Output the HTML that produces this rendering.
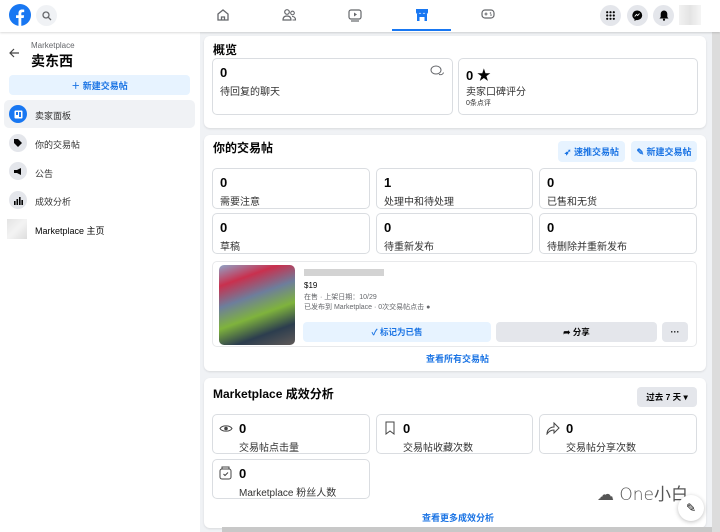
<!DOCTYPE html>
<html><head><meta charset="utf-8"><style>
*{box-sizing:border-box;margin:0;padding:0}
body{width:720px;height:532px;overflow:hidden;font-family:"Liberation Sans","Noto Sans CJK SC",sans-serif;background:#f0f2f5;position:relative;color:#050505}
.abs{position:absolute}
.top{left:0;top:0;width:720px;height:32px;background:#fff;box-shadow:0 1px 2px rgba(0,0,0,.15);z-index:3}
.side{left:0;top:32px;width:200px;height:500px;background:#fff}
.card{background:#fff;border-radius:6px;box-shadow:0 1px 2px rgba(0,0,0,.1)}
.tile{position:absolute;border:1px solid #dadde1;border-radius:5px;background:#fff}
.tile b{position:absolute;left:7px;top:6px;font-size:13px;font-weight:bold}
.tile span{position:absolute;left:7px;top:24px;font-size:10px;color:#333}
.h{position:absolute;font-size:12px;font-weight:bold}
.btnb{position:absolute;background:#e7f3ff;color:#1b74e4;font-size:9px;font-weight:bold;border-radius:4px;display:flex;align-items:center;justify-content:center;gap:3px}
.circ{position:absolute;width:19px;height:19px;border-radius:50%;background:#e4e6eb;display:flex;align-items:center;justify-content:center}
.si{position:absolute;left:9px;width:18px;height:18px;border-radius:50%;background:#e4e6eb;display:flex;align-items:center;justify-content:center}
.sl{position:absolute;left:35px;font-size:9px;color:#333}
.link{position:absolute;font-size:9px;color:#1b74e4;font-weight:bold}
</style></head><body>
<div class="abs top">
 <svg class="abs" style="left:9px;top:4px" width="22" height="22" viewBox="0 0 22 22"><circle cx="11" cy="11" r="11" fill="#1877f2"/><path d="M12.3 22V14h2.4l.4-2.8h-2.8V9.5c0-.8.3-1.4 1.4-1.4h1.5V5.6c-.3 0-1.1-.1-2.1-.1-2.2 0-3.6 1.3-3.6 3.7v2H7v2.8h2.5V22z" fill="#fff"/></svg>
 <div class="circ" style="left:36px;top:5px;width:21px;height:21px;background:#f0f2f5"><svg width="10" height="10" viewBox="0 0 10 10"><circle cx="4" cy="4" r="3" stroke="#65676b" stroke-width="1.3" fill="none"/><path d="M6.3 6.3L9 9" stroke="#65676b" stroke-width="1.3"/></svg></div>
 <svg class="abs" style="left:216px;top:8px" width="14" height="14" viewBox="0 0 14 14"><path d="M2 6L7 2l5 4v6H2z M5.5 12V9h3v3" stroke="#65676b" stroke-width="1.3" fill="none"/></svg>
 <svg class="abs" style="left:282px;top:8px" width="15" height="14" viewBox="0 0 15 14"><circle cx="5" cy="4" r="2.3" stroke="#65676b" stroke-width="1.2" fill="none"/><path d="M1 12c0-3 2-4 4-4s4 1 4 4z" stroke="#65676b" stroke-width="1.2" fill="none"/><circle cx="10.5" cy="5" r="1.8" stroke="#65676b" stroke-width="1.1" fill="none"/><path d="M10 8.5c2 0 3.5 1 3.5 3.5h-3" stroke="#65676b" stroke-width="1.1" fill="none"/></svg>
 <svg class="abs" style="left:348px;top:9px" width="15" height="13" viewBox="0 0 15 13"><rect x="1" y="1" width="12" height="9" rx="2" stroke="#65676b" stroke-width="1.2" fill="none"/><path d="M6 3.5v4l3-2z" fill="#65676b"/><path d="M3 12h8" stroke="#65676b" stroke-width="1.2"/></svg>
 <svg class="abs" style="left:415px;top:8px" width="14" height="14" viewBox="0 0 14 14"><path d="M1 1h12v3a2 2 0 0 1-4 0 2 2 0 0 1-4 0 2 2 0 0 1-4 0z" fill="#1877f2"/><rect x="2" y="6" width="10" height="7" fill="#1877f2"/><rect x="4.5" y="9" width="5" height="4" fill="#fff"/></svg>
 <div class="abs" style="left:392px;top:29px;width:59px;height:2px;background:#1877f2"></div>
 <svg class="abs" style="left:481px;top:9px" width="14" height="11" viewBox="0 0 14 11"><rect x="1" y="1" width="12" height="8" rx="3" stroke="#65676b" stroke-width="1.2" fill="none"/><path d="M3.5 5h3M5 3.5v3" stroke="#65676b" stroke-width="1.1"/><circle cx="9.5" cy="4" r=".8" fill="#65676b"/><circle cx="10" cy="6" r=".8" fill="#65676b"/></svg>
 <div class="circ" style="left:600px;top:5px;width:21px;height:21px"><svg width="9" height="9" viewBox="0 0 9 9" fill="#050505"><circle cx="1.2" cy="1.2" r="1.1"/><circle cx="4.5" cy="1.2" r="1.1"/><circle cx="7.8" cy="1.2" r="1.1"/><circle cx="1.2" cy="4.5" r="1.1"/><circle cx="4.5" cy="4.5" r="1.1"/><circle cx="7.8" cy="4.5" r="1.1"/><circle cx="1.2" cy="7.8" r="1.1"/><circle cx="4.5" cy="7.8" r="1.1"/><circle cx="7.8" cy="7.8" r="1.1"/></svg></div>
 <div class="circ" style="left:627px;top:5px;width:21px;height:21px"><svg width="11" height="11" viewBox="0 0 11 11"><path d="M5.5 0.5a5 4.8 0 0 0-3 8.7V11l1.7-1a5 4.8 0 1 0 1.3-9.5z" fill="#050505"/><path d="M2.7 6.5l1.8-2 1.2 1 1.8-2-1.8 2-1.2-1z" stroke="#fff" stroke-width="0.9" fill="none"/></svg></div>
 <div class="circ" style="left:653px;top:5px;width:21px;height:21px"><svg width="10" height="11" viewBox="0 0 10 11"><path d="M5 .5a3.3 3.3 0 0 0-3.3 3.3V7L.5 8.5h9L8.3 7V3.8A3.3 3.3 0 0 0 5 .5z" fill="#050505"/><circle cx="5" cy="9.7" r="1.1" fill="#050505"/></svg></div>
 <div class="abs" style="left:679px;top:5px;width:22px;height:20px;background:linear-gradient(90deg,#eee,#ddd,#f3f3f3);opacity:.8"></div>
</div>
<div class="abs side">
 <svg class="abs" style="left:9px;top:16px" width="11" height="10" viewBox="0 0 11 10"><path d="M10 5H1.5M5 1L1 5l4 4" stroke="#444" stroke-width="1.2" fill="none"/></svg>
 <div class="abs" style="left:31px;top:9px;font-size:8px;color:#65676b">Marketplace</div>
 <div class="abs" style="left:31px;top:19px;font-size:14px;font-weight:bold">卖东西</div>
 <div class="btnb" style="left:9px;top:43px;width:181px;height:20px">＋ 新建交易帖</div>
 <div class="abs" style="left:4px;top:68px;width:191px;height:28px;background:#f0f2f5;border-radius:5px"></div>
 <div class="si" style="top:73px;background:#1877f2"><svg width="9" height="9" viewBox="0 0 9 9"><rect x=".5" y=".5" width="8" height="8" rx="1" fill="#fff"/><rect x="2" y="2" width="2" height="3" fill="#1877f2"/><rect x="5" y="2" width="2" height="5" fill="#1877f2"/></svg></div>
 <div class="sl" style="top:77px">卖家面板</div>
 <div class="si" style="top:102px"><svg width="10" height="10" viewBox="0 0 10 10"><path d="M1 1h4l4 4-4 4-4-4z" fill="#050505"/></svg></div>
 <div class="sl" style="top:106px">你的交易帖</div>
 <div class="si" style="top:130px"><svg width="10" height="9" viewBox="0 0 10 9"><path d="M1 3h3l4-2v7L4 6H1z" fill="#050505"/></svg></div>
 <div class="sl" style="top:135px">公告</div>
 <div class="si" style="top:159px"><svg width="9" height="9" viewBox="0 0 9 9" fill="#050505"><rect x="0" y="5" width="1.6" height="4"/><rect x="2.5" y="3" width="1.6" height="6"/><rect x="5" y="1" width="1.6" height="8"/><rect x="7.4" y="4" width="1.6" height="5"/></svg></div>
 <div class="sl" style="top:163px">成效分析</div>
 <div class="abs" style="left:7px;top:187px;width:20px;height:20px;background:linear-gradient(135deg,#e3e3e3,#f3f3f3,#ddd)"></div>
 <div class="sl" style="top:192px;color:#050505">Marketplace 主页</div>
</div>
<div class="abs card" style="left:204px;top:36px;width:502px;height:92px">
 <div class="h" style="left:9px;top:5px">概览</div>
 <div class="tile" style="left:8px;top:22px;width:241px;height:57px"><b>0</b><span>待回复的聊天</span>
  <svg class="abs" style="left:217px;top:6px" width="15" height="13" viewBox="0 0 15 13"><ellipse cx="6" cy="5" rx="5" ry="4" stroke="#65676b" fill="none"/><path d="M9 9.5c2 .5 4 0 4.5-2" stroke="#65676b" fill="none"/></svg></div>
 <div class="tile" style="left:254px;top:22px;width:240px;height:57px"><b>0 <span style="position:static;font-size:14px;color:#050505">★</span></b><span>卖家口碑评分</span><span style="top:39px;font-size:7px">0条点评</span></div>
</div>
<div class="abs card" style="left:204px;top:135px;width:502px;height:236px">
 <div class="h" style="left:9px;top:4px">你的交易帖</div>
 <div class="btnb" style="left:354px;top:6px;width:67px;height:21px">➶ 速推交易帖</div>
 <div class="btnb" style="left:427px;top:6px;width:66px;height:21px">✎ 新建交易帖</div>
 <div class="tile" style="left:8px;top:33px;width:158px;height:41px"><b>0</b><span>需要注意</span></div>
 <div class="tile" style="left:172px;top:33px;width:157px;height:41px"><b>1</b><span>处理中和待处理</span></div>
 <div class="tile" style="left:335px;top:33px;width:158px;height:41px"><b>0</b><span>已售和无货</span></div>
 <div class="tile" style="left:8px;top:78px;width:158px;height:41px"><b>0</b><span>草稿</span></div>
 <div class="tile" style="left:172px;top:78px;width:157px;height:41px"><b>0</b><span>待重新发布</span></div>
 <div class="tile" style="left:335px;top:78px;width:158px;height:41px"><b>0</b><span>待删除并重新发布</span></div>
 <div class="tile" style="left:8px;top:126px;width:485px;height:86px;border-color:#e8e9eb"></div>
 <div class="abs" style="left:15px;top:130px;width:76px;height:80px;border-radius:5px;background:linear-gradient(160deg,#8fa4c8 0%,#c9304e 20%,#6d7e9c 40%,#7fb33c 60%,#2c3d4e 80%,#605a58 100%)"></div>
 <div class="abs" style="left:100px;top:134px;width:80px;height:7px;background:#c8c8c8;opacity:.8"></div>
 <div class="abs" style="left:100px;top:146px;font-size:8px">$19</div>
 <div class="abs" style="left:100px;top:157px;font-size:7px;color:#65676b">在售 · 上架日期：10/29</div>
 <div class="abs" style="left:100px;top:167px;font-size:7px;color:#65676b">已发布到 Marketplace · 0次交易帖点击 ●</div>
 <div class="btnb" style="left:99px;top:187px;width:188px;height:20px;font-size:8.5px">✓ 标记为已售</div>
 <div class="btnb" style="left:292px;top:187px;width:161px;height:20px;font-size:8.5px;background:#e4e6eb;color:#050505">➦ 分享</div>
 <div class="btnb" style="left:458px;top:187px;width:26px;height:20px;background:#e4e6eb;color:#050505">···</div>
 <div class="link" style="left:222px;top:217px">查看所有交易帖</div>
</div>
<div class="abs card" style="left:204px;top:378px;width:502px;height:150px">
 <div class="h" style="left:9px;top:7px">Marketplace 成效分析</div>
 <div class="btnb" style="left:433px;top:9px;width:60px;height:20px;background:#e4e6eb;color:#050505;font-size:8.5px">过去 7 天 ▾</div>
 <div class="tile" style="left:8px;top:36px;width:158px;height:40px"><b style="left:26px">0</b><span style="left:26px">交易帖点击量</span><svg class="abs" style="left:6px;top:9px" width="14" height="9" viewBox="0 0 14 9"><path d="M1 4.5C3 1 11 1 13 4.5 11 8 3 8 1 4.5z" stroke="#444" fill="none"/><circle cx="7" cy="4.5" r="1.8" fill="#444"/></svg></div>
 <div class="tile" style="left:172px;top:36px;width:157px;height:40px"><b style="left:26px">0</b><span style="left:26px">交易帖收藏次数</span><svg class="abs" style="left:8px;top:6px" width="10" height="14" viewBox="0 0 10 14"><path d="M1 1h8v12L5 10 1 13z" stroke="#444" fill="none"/></svg></div>
 <div class="tile" style="left:335px;top:36px;width:158px;height:40px"><b style="left:26px">0</b><span style="left:26px">交易帖分享次数</span><svg class="abs" style="left:6px;top:7px" width="14" height="13" viewBox="0 0 14 13"><path d="M8 1l5 5-5 5V8C5 8 3 9 1 12c0-4 3-7 7-7z" stroke="#444" fill="none"/></svg></div>
 <div class="tile" style="left:8px;top:81px;width:158px;height:40px"><b style="left:26px">0</b><span style="left:26px">Marketplace 粉丝人数</span><svg class="abs" style="left:6px;top:6px" width="13" height="14" viewBox="0 0 13 14"><rect x="1" y="3" width="11" height="10" rx="2" stroke="#444" fill="none"/><path d="M3 3V1h7v2M4.5 8l1.5 1.5 3-3" stroke="#444" fill="none"/></svg></div>
 <div class="link" style="left:218px;top:133px">查看更多成效分析</div>
 <div class="abs" style="left:393px;top:102px;font-size:17px;color:#555;font-family:'DejaVu Sans',sans-serif;font-weight:300">☁ One小白</div>
 <div class="abs" style="left:474px;top:117px;width:26px;height:26px;border-radius:50%;background:#fff;box-shadow:0 1px 4px rgba(0,0,0,.25);font-size:12px;text-align:center;line-height:26px">✎</div>
</div>
<div class="abs" style="left:712px;top:0;width:8px;height:532px;background:#dcdcdc"></div>
<div class="abs" style="left:712px;top:4px;width:8px;height:24px;background:#bdbdbd"></div>
<div class="abs" style="left:222px;top:527px;width:490px;height:5px;background:#c8c8c8"></div>
</body></html>
